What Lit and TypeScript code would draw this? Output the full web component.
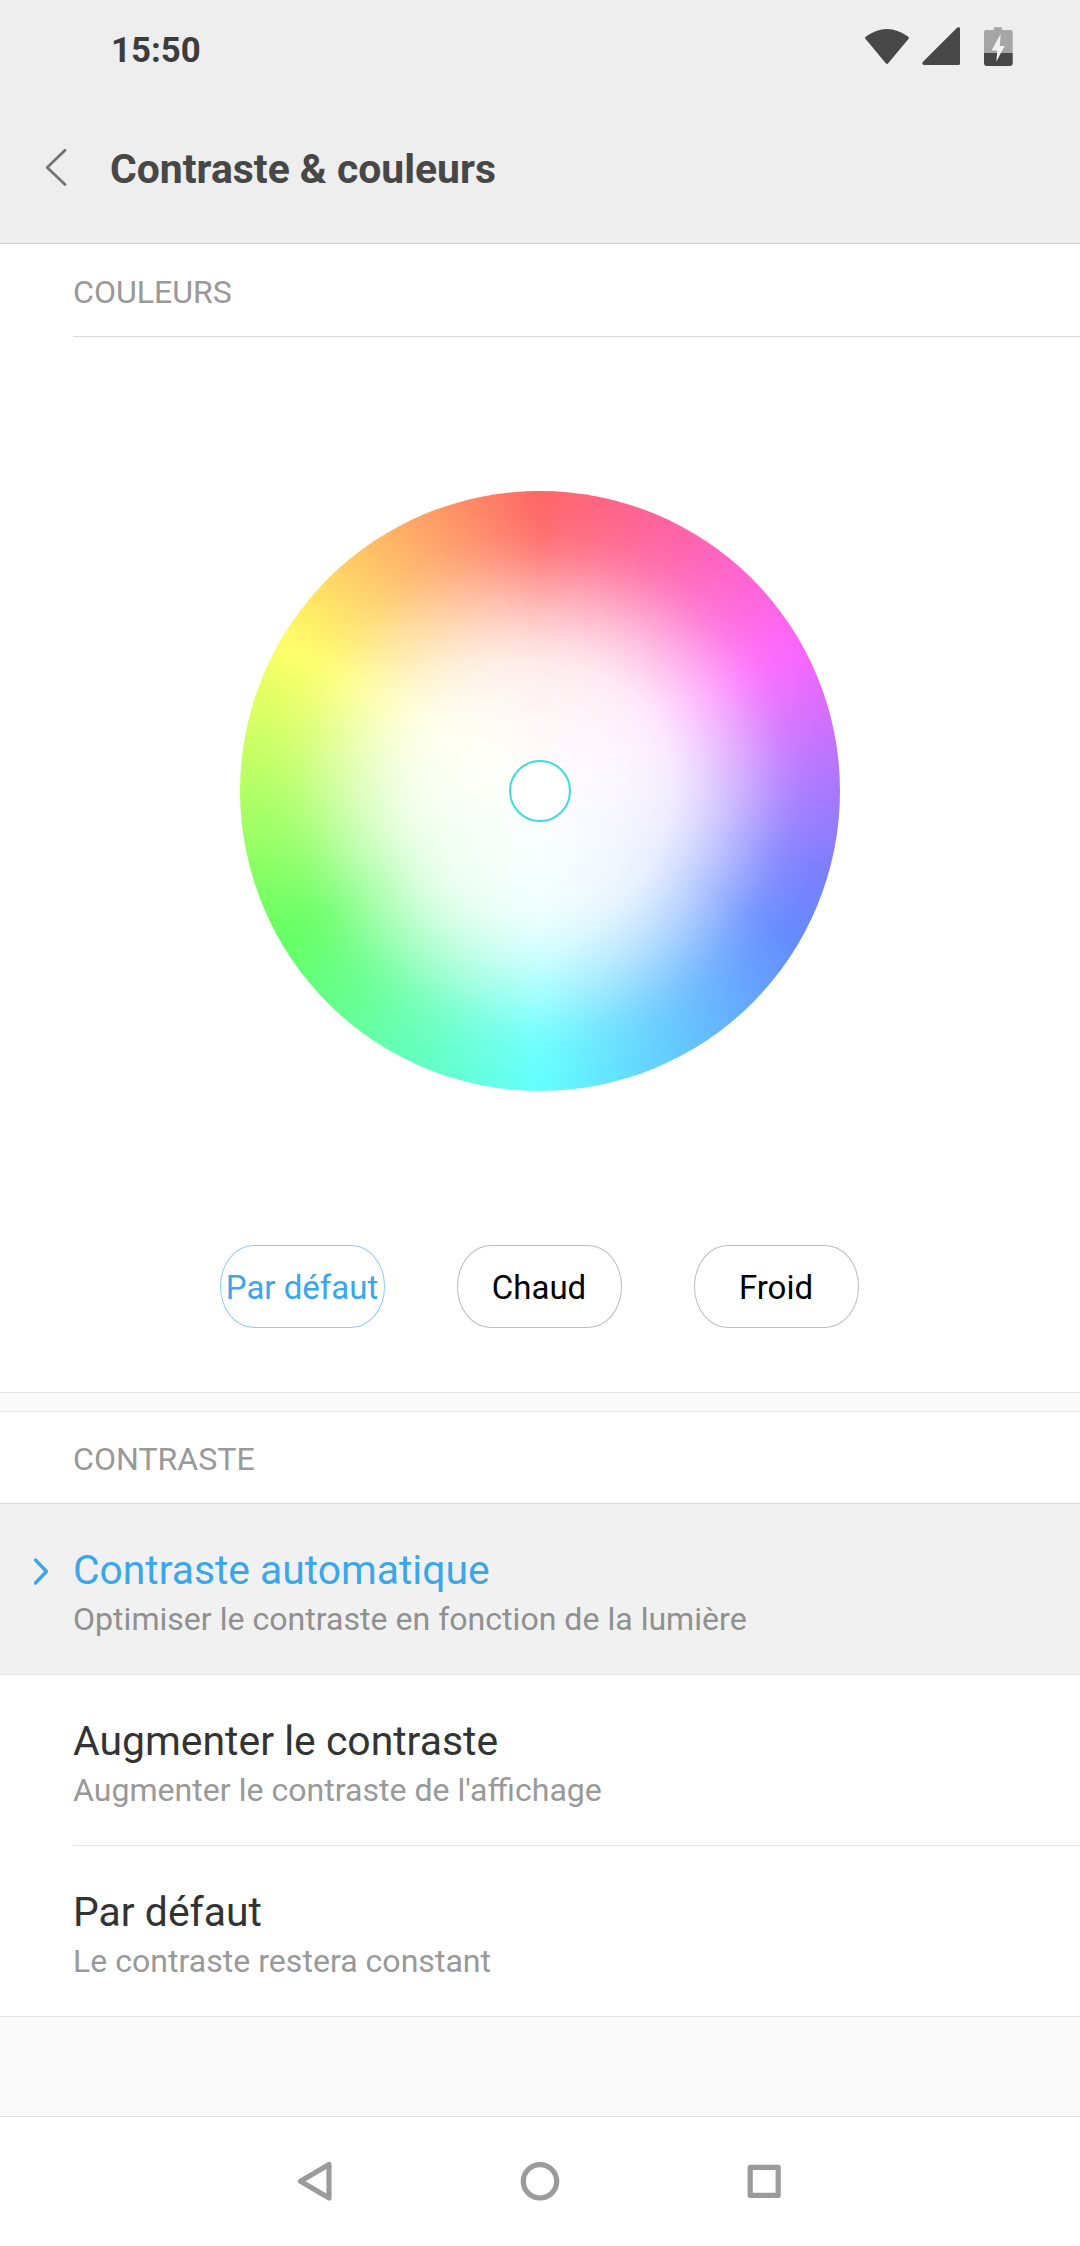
import { LitElement, html, css } from "lit";
import { customElement, property, state } from "lit/decorators.js";
import { classMap } from "lit/directives/class-map.js";

@customElement("status-bar")
class StatusBar extends LitElement {
  static styles = css`
    :host {
      display: flex;
      justify-content: space-between;
      height: 98px;
      padding: 0 67px 0 111px;
    }
    .time {
      font-size: 34.8px;
      font-weight: 700;
      line-height: 100px;
      color: #3c3c3c;
    }
    .icons {
      display: flex;
      height: 98px;
    }
    svg {
      display: block;
    }
  `;
  render() {
    return html`
      <span class="time">15:50</span>
      <div class="icons">
        <svg width="148" height="98" viewBox="865 0 148 98">
          <path
            d="M866 36.5Q886.800 21.500 908 36.500Q909.600 37.600 908.400 39L888.200 63.300Q887 64.600 885.800 63.300L865.600 39Q864.400 37.600 866 36.500Z"
            fill="#474747"
          />
          <path
            d="M923 61.800L956.800 27.900Q958.300 26.600 960 27.800V63.400Q960 65 958.400 65H924Q921.200 64.600 923 61.800Z"
            fill="#474747"
          />
          <path
            d="M994 27.200H1002V30H1010.700Q1012.700 30 1012.700 32V53H984V32Q984 30 986 30H994Z"
            fill="#a6a6a6"
          />
          <path
            d="M984 53H1012.700V63.600Q1012.700 66 1010.300 66H986.400Q984 66 984 63.600Z"
            fill="#474747"
          />
          <path d="M1000.700 33.700L991.600 50.600H997.300L996.300 61.700L1004.600 46H999.800Z" fill="#f2f2f2" />
        </svg>
      </div>
    `;
  }
}

@customElement("color-wheel")
class ColorWheel extends LitElement {
  static styles = css`
    :host {
      display: grid;
      place-items: center;
      width: 600px;
      height: 600px;
      border-radius: 50%;
      background:
        radial-gradient(
          circle closest-side,
          #fff 0%,
          rgba(255, 255, 255, 0.97) 10%,
          rgba(255, 255, 255, 0.945) 25%,
          rgba(255, 255, 255, 0.9) 37%,
          rgba(255, 255, 255, 0.85) 44%,
          rgba(255, 255, 255, 0.76) 50%,
          rgba(255, 255, 255, 0.65) 56%,
          rgba(255, 255, 255, 0.53) 62%,
          rgba(255, 255, 255, 0.4) 68%,
          rgba(255, 255, 255, 0.27) 74%,
          rgba(255, 255, 255, 0.15) 80%,
          rgba(255, 255, 255, 0.07) 86%,
          rgba(255, 255, 255, 0.02) 93%,
          rgba(255, 255, 255, 0) 100%
        ),
        conic-gradient(
          #ff6666 0deg,
          #ff64a8 28deg,
          #ff66f2 56deg,
          #f966ff 62deg,
          #a878ff 90deg,
          #7f7eff 105deg,
          #648aff 120deg,
          #64fbff 178deg,
          #64fffb 182deg,
          #66ff68 238deg,
          #69ff64 242deg,
          #fbff66 298deg,
          #fffa66 302deg,
          #ff6666 360deg
        );
    }
    .handle {
      box-sizing: border-box;
      width: 62px;
      height: 62px;
      border: 2px solid #3fdcdf;
      border-radius: 50%;
      background: #fff;
    }
  `;
  render() {
    return html`<div class="handle"></div>`;
  }
}

@customElement("contrast-option")
class ContrastOption extends LitElement {
  @property() label = "";
  @property() detail = "";
  @property({ type: Boolean, reflect: true }) selected = false;
  static styles = css`
    :host {
      display: flex;
      box-sizing: border-box;
      height: 171px;
      padding-top: 41px;
      color: #333;
    }
    :host([selected]) {
      background: #f1f1f1;
      color: #3aa6ec;
    }
    .marker {
      width: 73px;
      flex: none;
    }
    svg {
      display: block;
    }
    .label {
      font-size: 40.9px;
      line-height: 50px;
    }
    .detail {
      font-size: 32.1px;
      line-height: 48px;
      color: #999;
    }
    :host([selected]) .label {
      font-size: 40.8px;
    }
    :host([selected]) .detail {
      color: #909090;
    }
  `;
  render() {
    return html`
      <div class="marker">
        ${this.selected
          ? html`<svg width="73" height="50" viewBox="0 0 73 50">
              <path
                d="M35.500 15L46.500 26.500L35.500 38"
                fill="none"
                stroke="#3aa6ec"
                stroke-width="3.400"
                stroke-linecap="round"
                stroke-linejoin="round"
              />
            </svg>`
          : null}
      </div>
      <div>
        <div class="label">${this.label}</div>
        <div class="detail">${this.detail}</div>
      </div>
    `;
  }
}

@customElement("app-root")
class AppRoot extends LitElement {
  @state() tone = 0;
  @state() contrast = 0;
  private tones = ["Par défaut", "Chaud", "Froid"];
  private options = [
    ["Contraste automatique", "Optimiser le contraste en fonction de la lumière"],
    ["Augmenter le contraste", "Augmenter le contraste de l'affichage"],
    ["Par défaut", "Le contraste restera constant"],
  ];
  static styles = css`
    :host {
      display: flex;
      flex-direction: column;
      height: 2246px;
      background: #fff;
      font-family: Roboto, sans-serif;
      overflow: hidden;
    }
    svg {
      display: block;
    }
    .top {
      box-sizing: border-box;
      height: 244px;
      background: #eee;
      border-bottom: 1px solid #c8c8c8;
    }
    .title-bar {
      display: flex;
      align-items: center;
      height: 142px;
    }
    .title {
      margin: 0;
      font-size: 40.9px;
      font-weight: 700;
      line-height: 60px;
      color: #474747;
    }
    .section {
      box-sizing: border-box;
      margin-left: 73px;
      height: 93px;
      font-size: 32.1px;
      line-height: 97px;
      color: #999;
      border-bottom: 1px solid #d8d8d8;
    }
    .section.full {
      height: 92px;
      margin-left: 0;
      padding-left: 73px;
      line-height: 95px;
    }
    .wheel {
      display: flex;
      justify-content: center;
      padding: 154px 0;
    }
    .tones {
      display: flex;
      justify-content: center;
      gap: 72px;
      padding: 0 2px 64px 0;
    }
    .tone {
      box-sizing: border-box;
      width: 165px;
      height: 83px;
      padding: 1px 0 0;
      border: 1px solid #bdbdbd;
      border-radius: 34px / 41px;
      background: #fff;
      font: 33px/81px Roboto, sans-serif;
      display: flex;
      justify-content: center;
      align-items: center;
      white-space: nowrap;
      color: #000;
    }
    .tone.active {
      color: #3aa6ec;
      border-color: #8fcdf0;
    }
    .gap {
      box-sizing: border-box;
      height: 20px;
      background: #fafafa;
      border: solid #e4e4e4;
      border-width: 1px 0;
    }
    .line {
      height: 1px;
      background: #e4e4e4;
      margin-top: -1px;
    }
    .line.inset {
      margin-left: 73px;
    }
    .rest {
      flex: 1;
      background: #fafafa;
      border-bottom: 1px solid #e0e0e0;
    }
    .nav {
      display: flex;
      justify-content: center;
      align-items: center;
      gap: 180px;
      height: 129px;
    }
  `;
  render() {
    return html`
      <header class="top">
        <status-bar></status-bar>
        <div class="title-bar">
          <svg width="110" height="142" viewBox="0 98 110 142">
            <path
              d="M65 150.300L47.200 167.500L65 184.500"
              fill="none"
              stroke="#747474"
              stroke-width="2.800"
              stroke-linecap="round"
              stroke-linejoin="round"
            />
          </svg>
          <h1 class="title">Contraste &amp; couleurs</h1>
        </div>
      </header>
      <div class="section">COULEURS</div>
      <div class="wheel"><color-wheel></color-wheel></div>
      <div class="tones">
        ${this.tones.map(
          (t, i) => html`<button
            class=${classMap({ tone: true, active: i === this.tone })}
            @click=${() => (this.tone = i)}
          >
            ${t}
          </button>`
        )}
      </div>
      <div class="gap"></div>
      <div class="section full">CONTRASTE</div>
      ${this.options.map(
        ([label, detail], i) => html`
          <contrast-option
            .label=${label}
            .detail=${detail}
            ?selected=${i === this.contrast}
            @click=${() => (this.contrast = i)}
          ></contrast-option>
          <div class=${classMap({ line: true, inset: i === 1 })}></div>
        `
      )}
      <div class="rest"></div>
      <nav class="nav">
        <svg width="44" height="44" viewBox="293.500 2159.500 44 44">
          <path
            d="M328.500 2164V2197.500L300 2180.800Z"
            fill="none"
            stroke="#9b9b9b"
            stroke-width="5.200"
            stroke-linejoin="round"
          />
        </svg>
        <svg width="44" height="44" viewBox="0 0 44 44">
          <circle cx="22" cy="21.300" r="16.700" fill="none" stroke="#9b9b9b" stroke-width="5.200" />
        </svg>
        <svg width="44" height="44" viewBox="0 0 44 44">
          <rect
            x="8.200"
            y="7.300"
            width="28"
            height="28"
            fill="none"
            stroke="#9b9b9b"
            stroke-width="5.200"
            stroke-linejoin="round"
          />
        </svg>
      </nav>
    `;
  }
}
